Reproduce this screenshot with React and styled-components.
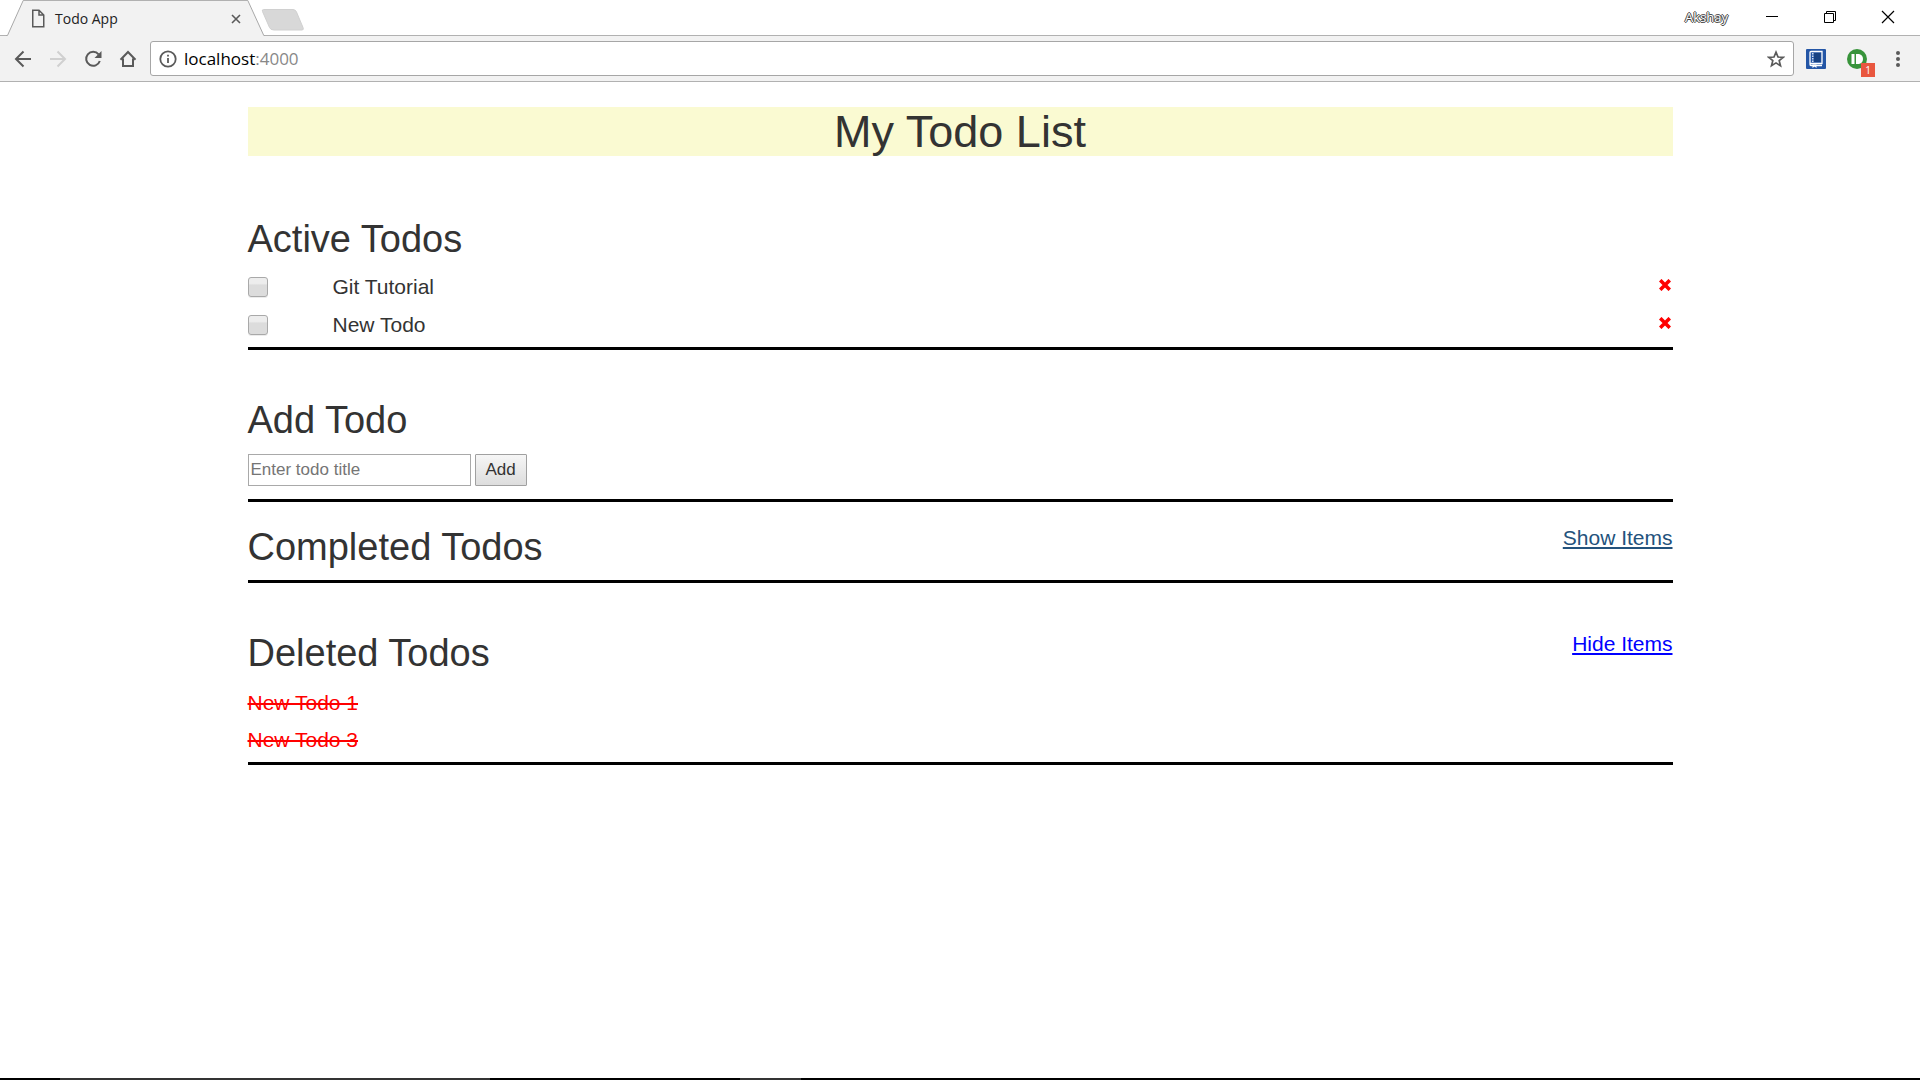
import React, { useState } from "react";
import styled, { createGlobalStyle } from "styled-components";

const Global = createGlobalStyle`
  *, *::before, *::after { box-sizing: border-box; }
  body { margin: 0; background: #fff; color: #333; font-family: "Liberation Sans", Arial, sans-serif; }
  button { font: inherit; padding: 0; border: 0; background: none; color: inherit; }
  svg { display: block; }
  h1, h2 { font-weight: 400; margin: 0; }
`;

const Window = styled.div`
  min-height: 100vh;
  display: flex;
  flex-direction: column;
`;

const TabStrip = styled.header`
  display: flex;
  height: 36px;
  font-family: "Open Sans", "Noto Sans", sans-serif;
`;

const StripEdge = styled.div`
  width: 6px;
  border-bottom: 1px solid #b1b1b1;
`;

const Tab = styled.div`
  display: flex;
  align-items: center;
  width: 223px;
  padding: 0 5px 0 7px;
  background: #f2f2f2;
  border-top: 1px solid #b1b1b1;
  font-size: 14px;
  line-height: 20px;
  color: #222;
`;

const TabTitle = styled.span`
  flex: 1;
  padding-left: 10px;
`;

const StripRest = styled.div`
  flex: 1;
  display: flex;
  align-items: center;
  border-bottom: 1px solid #b1b1b1;
`;

const NewTab = styled.button`
  margin: 0 0 -4px -4px;
`;

const WindowControls = styled.div`
  display: flex;
  align-items: center;
  margin-left: auto;
  padding: 0 25px 2px 0;
`;

const Profile = styled.button`
  margin-right: 37px;
  font-size: 13px;
  line-height: 20px;
  color: #fff;
  text-shadow: -1px 0 #444, 1px 0 #444, 0 -1px #444, 0 1px #444;
`;

const ControlButton = styled.button`
  width: 14px;
  & + & { margin-left: 44px; }
`;

const Toolbar = styled.nav`
  display: flex;
  align-items: center;
  height: 46px;
  padding: 0 12px 0 14px;
  background: #f2f2f2;
  border-bottom: 1px solid #b1b1b1;
  font-family: "Open Sans", "Noto Sans", sans-serif;
`;

const NavButtons = styled.div`
  display: flex;
  gap: 17px;
  margin-right: 13px;
  color: #5a5a5a;
`;

const Omnibox = styled.div`
  flex: 1;
  display: flex;
  align-items: center;
  height: 35px;
  padding: 0 8px;
  background: #fff;
  border: 1px solid #a6a6a6;
  border-radius: 3px;
  font-size: 17px;
  line-height: 24px;
  color: #000;
`;

const Address = styled.span`
  flex: 1;
  padding-left: 7px;
`;

const Port = styled.span`
  color: #888;
`;

const Extensions = styled.div`
  display: flex;
  align-items: center;
  margin-left: 12px;
`;

const ExtensionButton = styled.button`
  position: relative;
  margin-right: 21px;
`;

const Badge = styled.span`
  position: absolute;
  left: 14px;
  top: 14px;
  width: 14px;
  height: 14px;
  background: #e9573f;
  color: #fff;
  font-size: 10px;
  line-height: 14px;
  text-align: center;
`;

const Page = styled.main`
  flex: 1;
  width: 100%;
  max-width: 1463px;
  margin: 0 auto;
  padding: 25px 19px;
`;

const Title = styled.h1`
  margin-bottom: 63px;
  background: #fafad2;
  font-size: 45px;
  line-height: 49px;
  text-align: center;
`;

const Section = styled.section`
  margin-bottom: ${(p) => p.$gap || 0}px;
  padding-bottom: ${(p) => p.$pad}px;
  border-bottom: 3px solid #000;
`;

const SectionHead = styled.div`
  display: flex;
  justify-content: space-between;
  align-items: flex-start;
`;

const Heading = styled.h2`
  margin-bottom: 8px;
  font-size: 38px;
  line-height: 41px;
`;

const Toggle = styled.a`
  color: ${(p) => p.$color};
  font-size: 21px;
  line-height: 22px;
  text-decoration: underline;
`;

const List = styled.ul`
  margin: 0;
  padding: ${(p) => p.$top || 0}px 0 0;
  list-style: none;
`;

const Todo = styled.li`
  display: flex;
  align-items: center;
  height: 38px;
  font-size: 21px;
  line-height: 28px;
`;

const Check = styled.input`
  appearance: none;
  width: 20px;
  height: 20px;
  margin: 0 65px 0 0;
  border: 1px solid #a9a9a9;
  border-radius: 3px;
  background: linear-gradient(#ededed 30%, #dcdcdc 40%);
  box-shadow: 0 1px 0 #ececec;
`;

const Remove = styled.button`
  margin: 0 2px 5px auto;
`;

const Deleted = styled.li`
  height: 37px;
  color: #f00;
  font-size: 21px;
  line-height: 37px;
  text-decoration: line-through 2px;
`;

const AddForm = styled.form`
  display: flex;
  gap: 4px;
  padding-top: 5px;
  font-size: 17px;
`;

const TitleInput = styled.input`
  width: 223px;
  height: 32px;
  padding: 0 2px 1px;
  border: 1px solid #a9a9a9;
  font: inherit;
  color: #333;
  &::placeholder { color: #757575; opacity: 1; }
`;

const AddButton = styled.button`
  && {
    width: 52px;
    padding-bottom: 1px;
    border: 1px solid #a0a0a0;
    border-radius: 1px;
    background: linear-gradient(#f6f6f6, #dddddd);
  }
`;

const Taskbar = styled.footer`
  display: flex;
  height: 2px;
  background: #000;
`;

const TaskbarSegment = styled.div`
  width: ${(p) => p.$width}px;
  background: ${(p) => (p.$lit ? "#343434" : "#000")};
`;

const line = { fill: "none", stroke: "currentColor", strokeWidth: 2 };

function TabStripRow() {
  return (
    <TabStrip>
      <StripEdge />
      <svg width="18" height="36">
        <path d="M0 36V35.5H1L17.500 .5H18V36Z" fill="#f2f2f2" />
        <path d="M0 35.500H1.500L17.200 .5H18" fill="none" stroke="#a8a8a8" />
      </svg>
      <Tab>
        <svg width="14" height="19" viewBox="0 0 14 19" fill="none" stroke="#5a5a5a" strokeWidth="1.500">
          <path d="M1.750 1.250H8L12.750 6V17.750H1.750ZM8 1.250V6H12.750" />
        </svg>
        <TabTitle>Todo App</TabTitle>
        <button aria-label="Close tab">
          <svg width="12" height="12" stroke="#5a5a5a" strokeWidth="1.600"><path d="M2 2L10 10M10 2L2 10" /></svg>
        </button>
      </Tab>
      <svg width="18" height="36">
        <path d="M0 .5H.5L17 35.500H18V36H0Z" fill="#f2f2f2" />
        <path d="M0 .5H.8L16.800 35.500H18" fill="none" stroke="#a8a8a8" />
      </svg>
      <StripRest>
        <NewTab aria-label="New tab">
          <svg width="44" height="22" viewBox="0 0 44 22">
            <path d="M2.500 .5H32Q34.500 .5 35.500 3L42 18.500Q43 21 41 21H13Q9.500 21 8.500 18.500L1.500 2.500Q.7 .5 2.500 .5Z" fill="#d8d8d8" stroke="#d0d0d0" />
          </svg>
        </NewTab>
        <WindowControls>
          <Profile>Akshay</Profile>
          <ControlButton aria-label="Minimize">
            <svg width="14" height="14" stroke="#000"><path d="M1 6.500H13" /></svg>
          </ControlButton>
          <ControlButton aria-label="Restore">
            <svg width="14" height="14" fill="none" stroke="#000"><path d="M1.500 3.500H10.500V12.500H1.500ZM3.500 3.500V1.500H12.500V10.500H10.500" /></svg>
          </ControlButton>
          <ControlButton aria-label="Close">
            <svg width="14" height="14" stroke="#000" strokeWidth="1.200"><path d="M1 1L13 13M13 1L1 13" /></svg>
          </ControlButton>
        </WindowControls>
      </StripRest>
    </TabStrip>
  );
}

function ToolbarRow() {
  return (
    <Toolbar>
      <NavButtons>
        <button aria-label="Back">
          <svg width="18" height="18" {...line}><path d="M17 9H2.500M9.500 1.500L2 9L9.500 16.500" /></svg>
        </button>
        <button aria-label="Forward">
          <svg width="18" height="18" {...line} stroke="#d0d0d0"><path d="M1 9H15.500M8.500 1.500L16 9L8.500 16.500" /></svg>
        </button>
        <button aria-label="Reload">
          <svg width="18" height="18" {...line}>
            <path d="M14.600 4.400A7 7 0 1 0 15.800 11" />
            <path d="M17.500 1V8H10.500Z" fill="currentColor" stroke="none" />
          </svg>
        </button>
        <button aria-label="Home">
          <svg width="18" height="18" {...line}><path d="M1.500 9.700L9 2L16.500 9.700M4 8.500V16H14V8.500" /></svg>
        </button>
      </NavButtons>
      <Omnibox>
        <svg width="18" height="18" fill="none" stroke="#5a5a5a" strokeWidth="1.800">
          <circle cx="9" cy="9" r="7.700" /><path d="M9 8V13M9 4.800V6.600" />
        </svg>
        <Address>localhost<Port>:4000</Port></Address>
        <button aria-label="Bookmark this page">
          <svg width="18" height="18" viewBox="0 0 18 18" fill="none" stroke="#5a5a5a" strokeWidth="1.700">
            <path d="M9 2.200L11 7L16.200 7.300L12.200 10.600L13.500 15.700L9 12.900L4.500 15.700L5.800 10.600L1.800 7.300L7 7Z" />
          </svg>
        </button>
      </Omnibox>
      <Extensions>
        <ExtensionButton aria-label="Notebook extension">
          <svg width="20" height="20">
            <rect width="20" height="20" rx="1" fill="#2456a6" />
            <path d="M4 15V3.500Q4 2.500 5 2.500H16V14.500H5Q4 14.500 4 15.500Q4 16.500 5 16.500H16" fill="none" stroke="#fff" strokeWidth="1.300" />
            <path d="M6.800 4V13" stroke="#fff" strokeWidth="1.200" strokeDasharray="1.500 1" />
            <path d="M8 4H14.500V13H8Z" fill="#174182" />
            <path d="M6.500 15.500H10.500V19L8.500 17.500L6.500 19Z" fill="#fff" />
          </svg>
        </ExtensionButton>
        <ExtensionButton aria-label="Pushbullet, 1 notification">
          <svg width="20" height="20">
            <circle cx="10" cy="10" r="10" fill="#38943b" />
            <path d="M4.500 5H7.500V15H4.500ZM9 5H12Q16 6 16 10Q16 14 12 15H9Z" fill="#fff" />
          </svg>
          <Badge>1</Badge>
        </ExtensionButton>
        <button aria-label="Menu">
          <svg width="20" height="20" fill="#5a5a5a">
            <circle cx="10" cy="4" r="2" /><circle cx="10" cy="10" r="2" /><circle cx="10" cy="16" r="2" />
          </svg>
        </button>
      </Extensions>
    </Toolbar>
  );
}

function TodoRow({ id, children }) {
  return (
    <Todo>
      <Check type="checkbox" id={id} />
      <label htmlFor={id}>{children}</label>
      <Remove aria-label={`Delete ${children}`}>
        <svg width="12" height="12" stroke="#f00" strokeWidth="3.600"><path d="M1.200 1.200L10.800 10.800M10.800 1.200L1.200 10.800" /></svg>
      </Remove>
    </Todo>
  );
}

export default function App() {
  const [text, setText] = useState("");
  return (
    <Window>
      <Global />
      <TabStripRow />
      <ToolbarRow />
      <Page>
        <Title>My Todo List</Title>
        <Section $pad={3} $gap={50}>
          <Heading>Active Todos</Heading>
          <List>
            <TodoRow id="todo-git">Git Tutorial</TodoRow>
            <TodoRow id="todo-new">New Todo</TodoRow>
          </List>
        </Section>
        <Section $pad={13} $gap={25}>
          <Heading>Add Todo</Heading>
          <AddForm onSubmit={(e) => e.preventDefault()}>
            <TitleInput aria-label="Todo title" placeholder="Enter todo title" value={text} onChange={(e) => setText(e.target.value)} />
            <AddButton>Add</AddButton>
          </AddForm>
        </Section>
        <Section $pad={4} $gap={50}>
          <SectionHead>
            <Heading>Completed Todos</Heading>
            <Toggle href="#completed" $color="#23527c">Show Items</Toggle>
          </SectionHead>
        </Section>
        <Section $pad={4}>
          <SectionHead>
            <Heading>Deleted Todos</Heading>
            <Toggle href="#deleted" $color="#00f">Hide Items</Toggle>
          </SectionHead>
          <List $top={2}>
            <Deleted>New Todo 1</Deleted>
            <Deleted>New Todo 3</Deleted>
          </List>
        </Section>
      </Page>
      <Taskbar>
        <TaskbarSegment $width={60} />
        <TaskbarSegment $width={430} $lit />
        <TaskbarSegment $width={250} />
        <TaskbarSegment $width={61} $lit />
      </Taskbar>
    </Window>
  );
}
